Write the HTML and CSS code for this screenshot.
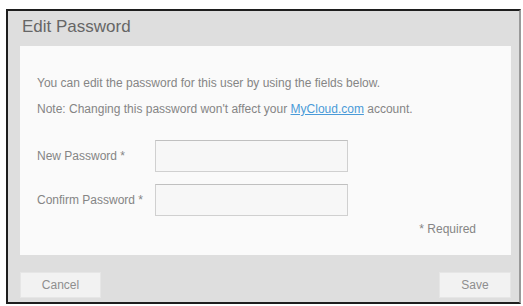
FILE: index.html
```html
<!DOCTYPE html>
<html>
<head>
<meta charset="utf-8">
<link rel="stylesheet" href="styles.css">
</head>
<body>
<div class="dialog">
  <div class="title">Edit Password</div>
  <div class="panel">
    <p class="line first">You can edit the password for this user by using the fields below.</p>
    <p class="line">Note: Changing this password won't affect your <a class="link" href="#">MyCloud.com</a> account.</p>
    <div class="fields">
      <div class="row"><label class="label">New Password *</label><div class="input"></div></div>
      <div class="row"><label class="label">Confirm Password *</label><div class="input"></div></div>
    </div>
    <div class="req">* Required</div>
  </div>
  <div class="footer">
    <div class="btn cancel">Cancel</div>
    <div class="btn save">Save</div>
  </div>
</div>
</body>
</html>
```
FILE: styles.css
```css
html, body { margin: 0; padding: 0; background: #ffffff; }
body { font-family: "Liberation Sans", Arial, sans-serif; width: 523px; height: 306px; overflow: hidden; }
.dialog {
  margin: 9px 2px 0 6px;
  height: 295px;
  box-sizing: border-box;
  border: 2px solid #1e1e1e;
  border-right-color: #9a9a9a;
  background: #dedede;
  display: flex;
  flex-direction: column;
}
.title {
  height: 35px;
  padding-left: 14px;
  font-size: 17px;
  line-height: 32px;
  color: #666666;
}
.panel {
  margin: 0 8px 0 12px;
  background: #fafafa;
  height: 209px;
  box-sizing: border-box;
  padding: 30px 0 0 17px;
  font-size: 12px;
  color: #858585;
}
.line { margin: 0; line-height: 14px; }
.line.first { margin-bottom: 12px; }
.link { color: #4a9ad8; text-decoration: underline; }
.fields { margin-top: 24px; display: flex; flex-direction: column; gap: 12px; }
.row { display: flex; align-items: center; }
.label { width: 118px; }
.input {
  width: 191px; height: 30px;
  background: #f7f7f7;
  border: 1px solid #d0d0d0;
  border-top-color: #c0c0c0;
}
.req { text-align: right; margin: 6px 35px 0 0; }
.footer {
  flex: 1;
  display: flex;
  justify-content: space-between;
  align-items: flex-start;
  padding: 17px 8px 0 12px;
}
.btn {
  height: 24px;
  line-height: 24px;
  background: #f2f2f2;
  border: 1px solid #e6e6e6;
  font-size: 12px;
  color: #8e8e8e;
  text-align: center;
}
.cancel { width: 79px; }
.save { width: 70px; }
```
